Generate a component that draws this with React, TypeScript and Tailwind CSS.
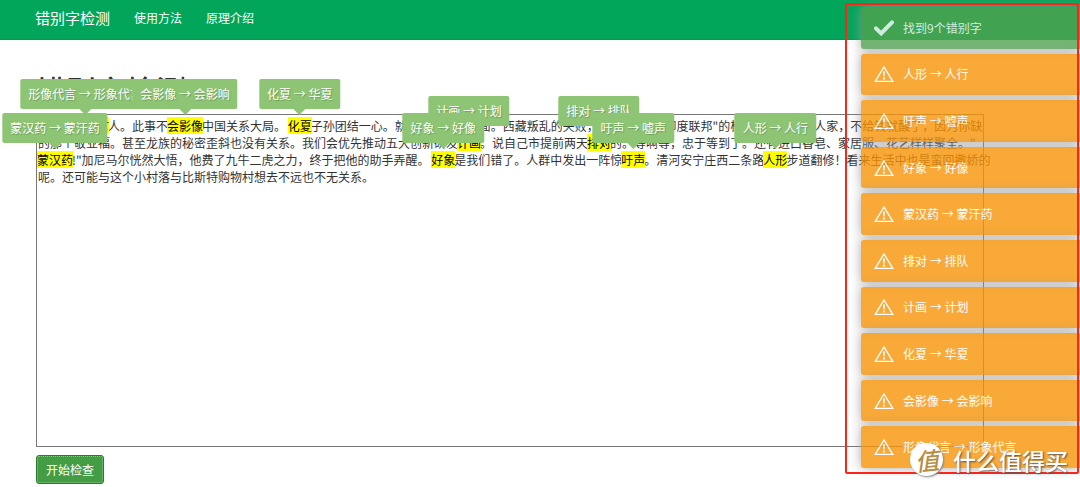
import type { ReactNode } from 'react'

const FOUND = [
  '人形 → 人行',
  '吁声 → 嘘声',
  '好象 → 好像',
  '蒙汉药 → 蒙汗药',
  '排对 → 排队',
  '计画 → 计划',
  '化夏 → 华夏',
  '会影像 → 会影响',
  '形像代言 → 形象代言',
]

function Typo({ word, fix }: { word: string; fix: string }) {
  return (
    <mark className="relative -mx-px inline-block bg-[#ffff00] text-black align-top">
      {word}
      <span className="absolute bottom-full left-1/2 z-10 mb-2 -translate-x-1/2 rounded-[2px] bg-[#8ec575] px-2 py-[7px] leading-4 text-white [text-shadow:1px_1px_1px_#6f9a5b]">
        {word} → {fix}
        <span className="absolute top-full left-1/2 -translate-x-1/2 border-x-[6px] border-t-[6px] border-x-transparent border-t-[#8ec575]" />
      </span>
    </mark>
  )
}

function Line({ children }: { children: ReactNode }) {
  return <p className="whitespace-nowrap">{children}</p>
}

function CheckIcon() {
  return (
    <svg width="20" height="16" viewBox="0 0 20 16" fill="none" aria-hidden>
      <path d="M2 8.4 7.2 13.4 18 2.4" stroke="#fff" strokeWidth="4" strokeLinecap="round" />
    </svg>
  )
}

function WarningIcon() {
  return (
    <svg width="20" height="18" viewBox="0 0 20 18" fill="none" aria-hidden>
      <path d="M10 2 18.8 16.4H1.2Z" stroke="#fff" strokeWidth="1.4" />
      <path d="M9 6.6h2l-.4 5H9.4Z" fill="#fff" />
      <circle cx="10" cy="13.6" r="1.1" fill="#fff" />
    </svg>
  )
}

function Toasts() {
  return (
    <div className="absolute top-[7px] right-0 z-20 flex h-[461px] w-[219px] flex-col gap-[5px]">
      <div
        role="status"
        className="flex flex-1 items-center gap-[9px] rounded-l-[3px] bg-[#51a351] pl-[13px] text-white opacity-80 shadow-[0_0_12px_#999]"
      >
        <CheckIcon />
        找到9个错别字
      </div>
      {FOUND.map((text) => (
        <div
          key={text}
          role="alert"
          className="flex flex-1 items-center gap-[9px] rounded-l-[3px] bg-[#f89406] pl-[13px] text-white opacity-80 shadow-[0_0_12px_#999]"
        >
          <WarningIcon />
          {text}
        </div>
      ))}
    </div>
  )
}

function Watermark() {
  return (
    <div className="absolute top-[443px] right-3 z-40 flex items-center gap-[10px]">
      <span className="flex size-[33px] items-center justify-center rounded-full bg-white shadow-[1px_1px_2px_#888]">
        <span className="-rotate-6 text-[24px] leading-8 font-medium text-[#b88d45] italic">值</span>
      </span>
      <span className="text-[23px] leading-8 font-medium text-white [text-shadow:1px_1px_2px_#555]">
        什么值得买
      </span>
    </div>
  )
}

export default function App() {
  return (
    <div className="relative overflow-hidden bg-white pb-[3px] font-['Noto_Sans_CJK_SC',sans-serif] text-[12px] text-[#333]">
      <nav className="flex h-10 items-center gap-6 border-b border-[#029a53] bg-[#02a65a] pb-[3px] pl-[35px] text-white">
        <a href="#" className="text-[15px]">
          错别字检测
        </a>
        <a href="#usage">使用方法</a>
        <a href="#about">原理介绍</a>
      </nav>

      <main className="pr-24 pl-9">
        <h1 className="mt-[29px] text-[30px] leading-10 font-medium">错别字检测</h1>

        <div
          role="textbox"
          aria-multiline="true"
          aria-label="待检测文本"
          contentEditable
          suppressContentEditableWarning
          spellCheck={false}
          className="mt-[5px] min-h-[333px] border border-[#777] pt-0.5 pl-px leading-[17px]"
        >
          <Line>
            中国
            <Typo word="形像代言" fix="形象代言" />
            人。此事不
            <Typo word="会影像" fix="会影响" />
            中国关系大局。{' '}
            <Typo word="化夏" fix="华夏" />
            子孙团结一心。就没有外部的局面。西藏叛乱的失败，使所谓的"大印度联邦"的构想破产了看看人家，不给钱就酸了，因为你缺
          </Line>
          <Line>
            的那个敬业福。甚至龙族的秘密歪斜也没有关系。我们会优先推动五大创新研发
            <Typo word="计画" fix="计划" />
            。说自己市提前两天
            <Typo word="排对" fix="排队" />
            的。等啊等，忠于等到了。还有进口香皂、家居服、花艺样样聚全。"
          </Line>
          <Line>
            <Typo word="蒙汉药" fix="蒙汗药" />
            !"加尼马尔恍然大悟，他费了九牛二虎之力，终于把他的助手弄醒。{' '}
            <Typo word="好象" fix="好像" />
            是我们错了。人群中发出一阵惊
            <Typo word="吁声" fix="嘘声" />
            。清河安宁庄西二条路
            <Typo word="人形" fix="人行" />
            步道翻修！看来生活中也是蛮回撒娇的
          </Line>
          <Line>呢。还可能与这个小村落与比斯特购物村想去不远也不无关系。</Line>
        </div>

        <button
          type="button"
          className="mt-2 block h-[29px] rounded-[3px] border border-[#2f7a2f] bg-[#449d44] px-[9px] text-white outline-1 -outline-offset-2 outline-[#8cc38c] outline-dotted"
        >
          开始检查
        </button>
      </main>

      <Toasts />
      <div className="pointer-events-none absolute top-[3px] right-px z-30 h-[471px] w-[234px] rounded-[2px] border-2 border-[#fb2518]" />
      <Watermark />
    </div>
  )
}
